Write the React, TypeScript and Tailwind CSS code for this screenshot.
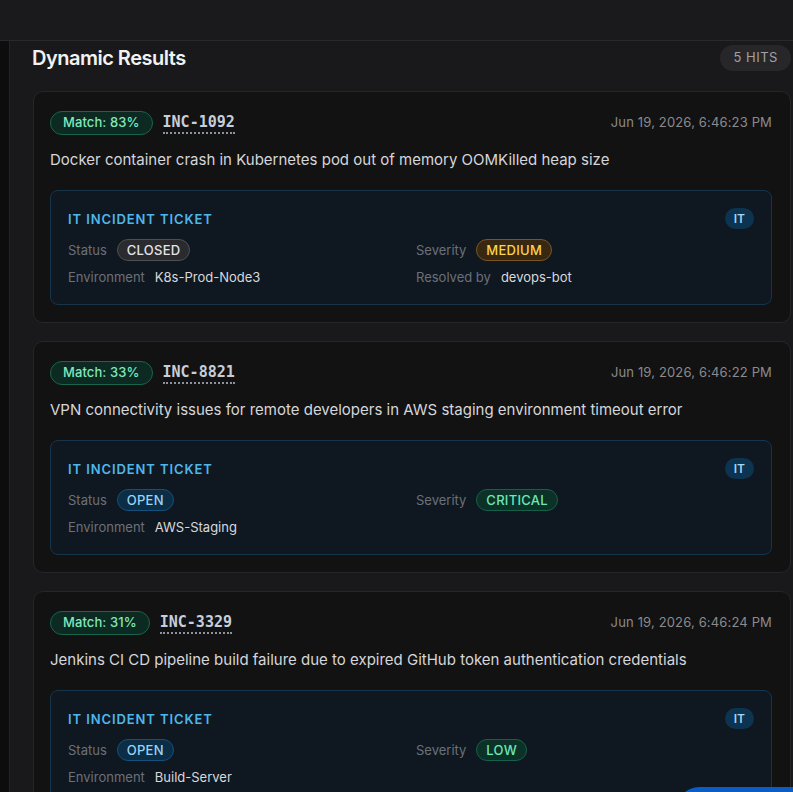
type Tone = 'gray' | 'amber' | 'sky' | 'green';

interface Field {
  label: string;
  value: string;
  tone?: Tone;
}

interface Ticket {
  id: string;
  match: number;
  time: string;
  summary: string;
  fields: Field[];
}

const tickets: Ticket[] = [
  {
    id: 'INC-1092',
    match: 83,
    time: 'Jun 19, 2026, 6:46:23 PM',
    summary: 'Docker container crash in Kubernetes pod out of memory OOMKilled heap size',
    fields: [
      { label: 'Status', value: 'CLOSED', tone: 'gray' },
      { label: 'Severity', value: 'MEDIUM', tone: 'amber' },
      { label: 'Environment', value: 'K8s-Prod-Node3' },
      { label: 'Resolved by', value: 'devops-bot' },
    ],
  },
  {
    id: 'INC-8821',
    match: 33,
    time: 'Jun 19, 2026, 6:46:22 PM',
    summary: 'VPN connectivity issues for remote developers in AWS staging environment timeout error',
    fields: [
      { label: 'Status', value: 'OPEN', tone: 'sky' },
      { label: 'Severity', value: 'CRITICAL', tone: 'green' },
      { label: 'Environment', value: 'AWS-Staging' },
    ],
  },
  {
    id: 'INC-3329',
    match: 31,
    time: 'Jun 19, 2026, 6:46:24 PM',
    summary: 'Jenkins CI CD pipeline build failure due to expired GitHub token authentication credentials',
    fields: [
      { label: 'Status', value: 'OPEN', tone: 'sky' },
      { label: 'Severity', value: 'LOW', tone: 'green' },
      { label: 'Environment', value: 'Build-Server' },
    ],
  },
];

const toneClasses: Record<Tone, string> = {
  gray: 'bg-[#2a2b2e] border-[#4d4f54] text-[#e4e4e7]',
  amber: 'bg-[#382812] border-[#7a5522] text-[#fcd34d]',
  sky: 'bg-[#0b2d46] border-[#15507a] text-[#9ad4f5]',
  green: 'bg-[#0c3127] border-[#15604a] text-[#6ee7b7]',
};

function Pill({ value, tone }: { value: string; tone: Tone }) {
  return (
    <span
      className={`inline-flex h-[22px] items-center rounded-full border px-[9px] text-[13px] font-medium tracking-[0.02em] ${toneClasses[tone]}`}
    >
      {value}
    </span>
  );
}

function TicketCard({ ticket }: { ticket: Ticket }) {
  return (
    <div className="rounded-[10px] border border-[#262628] bg-[#121213] pl-4 pr-[18px] pt-[19px] pb-[17px]">
      {/* Header */}
      <div className="flex items-center justify-between">
        <div className="flex items-center gap-[10px]">
          <span className="inline-flex h-[24px] items-center rounded-full border border-[#17664b] bg-[#0c2a21] px-3 text-[13px] font-medium tracking-[0.1px] text-[#80e8bc]">
            Match: {ticket.match}%
          </span>
          <span className="border-b-2 border-dotted border-[#8b93a1] font-['DejaVu_Sans_Mono',monospace] text-[15px] font-bold leading-[20px] text-[#c7ceda]">
            {ticket.id}
          </span>
        </div>
        <span className="text-[13px] tracking-[0.15px] text-[#8a8a8f]">{ticket.time}</span>
      </div>

      <p className="mt-[14px] text-[15px] leading-[22px] text-[#d6d6da]">{ticket.summary}</p>

      {/* Ticket details */}
      <div className="mt-[19px] rounded-lg border border-[#16354b] bg-[#0f1821] px-[17px] pt-[17px] pb-[17px]">
        <div className="flex items-center justify-between">
          <span className="text-[13px] font-semibold leading-5 tracking-[0.07em] text-[#4fb6ea]">
            IT INCIDENT TICKET
          </span>
          <span className="inline-flex h-[21px] items-center rounded-full bg-[#0c3350] px-[9px] text-[12px] font-semibold text-[#a3d6f3]">
            IT
          </span>
        </div>
        <div className="mt-[10px] grid grid-cols-2 gap-x-[10px] gap-y-[6px]">
          {ticket.fields.map((f) => (
            <div key={f.label} className="flex items-center gap-[10px] text-[13px] leading-5">
              <span className="text-[#6c7078]">{f.label}</span>
              {f.tone ? (
                <Pill value={f.value} tone={f.tone} />
              ) : (
                <span className="text-[#d8d8dc]">{f.value}</span>
              )}
            </div>
          ))}
        </div>
      </div>
    </div>
  );
}

export default function App() {
  return (
    <div className="relative flex h-[792px] flex-col overflow-hidden bg-[#19191b] font-['Inter',sans-serif] antialiased">
      {/* Top bar */}
      <div className="h-[41px] shrink-0 border-b border-[#29292c] bg-[#1a1a1c]" />

      <div className="flex min-h-0 flex-1">
        <div className="w-[10px] shrink-0 border-r border-[#242427] bg-[#0d0d0e]" />

        <main className="flex-1 pl-[22px] pr-[2px] pt-[4px]">
          <div className="flex h-[26px] items-center justify-between">
            <h2 className="text-[20px] font-semibold tracking-[-0.5px] text-[#f2f2f3]">Dynamic Results</h2>
            <span className="inline-flex h-[26px] items-center rounded-full bg-[#27272a] px-[13px] text-[13px] tracking-[0.04em] text-[#a1a1a6]">
              5 HITS
            </span>
          </div>

          <div className="mt-5 ml-px flex flex-col gap-[18px]">
            {tickets.map((t) => (
              <TicketCard key={t.id} ticket={t} />
            ))}
          </div>
        </main>
      </div>

      {/* Floating action button, mostly below the fold */}
      <div className="absolute left-[677px] top-[787px] h-[44px] w-[170px] rounded-full bg-[#0b5cc4]" />
    </div>
  );
}
